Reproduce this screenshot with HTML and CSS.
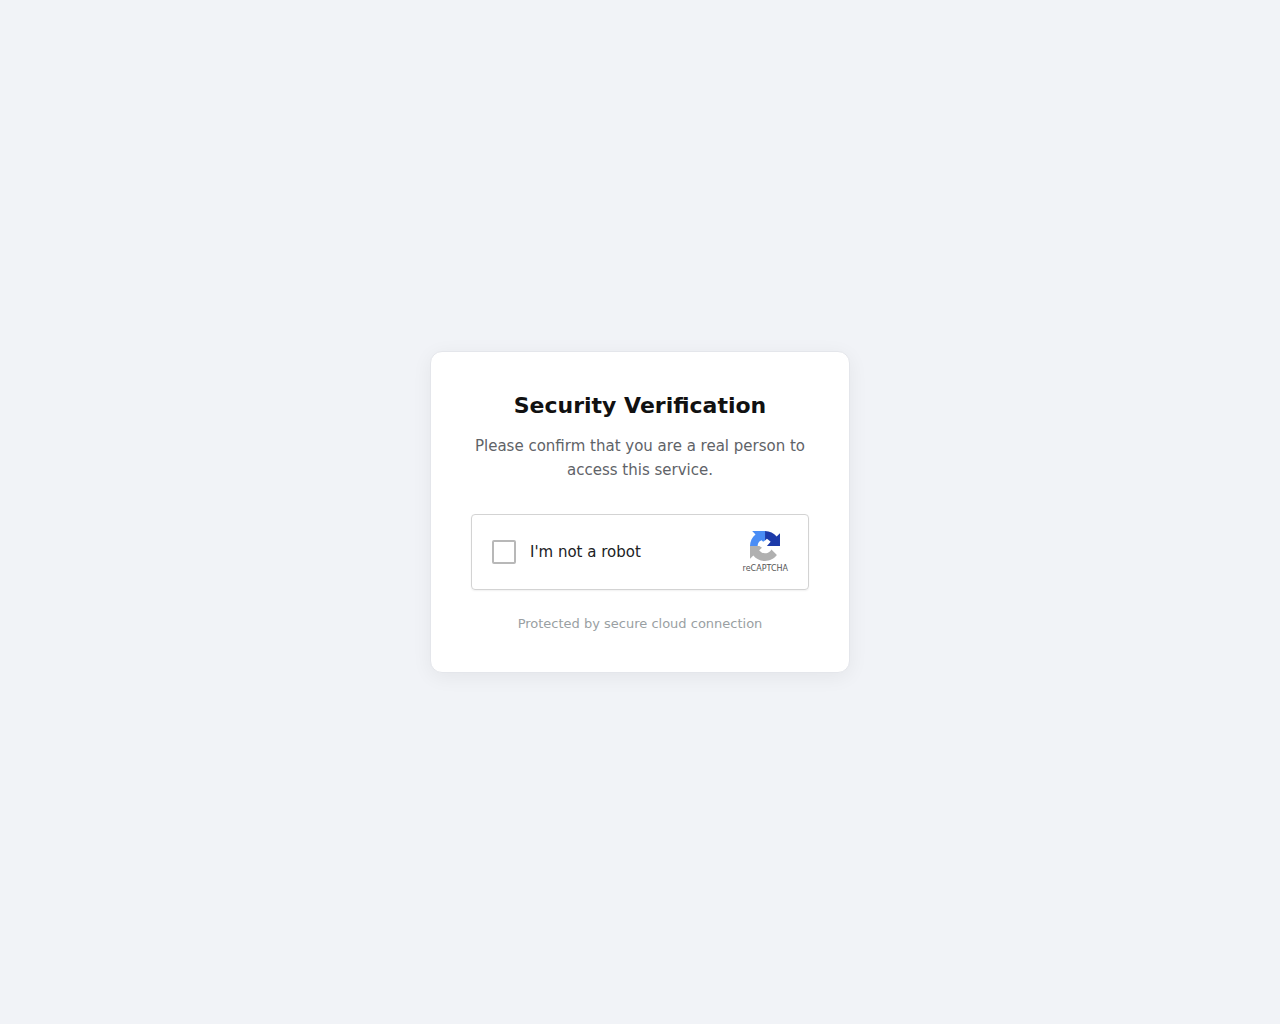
FILE: index.html
```
<!DOCTYPE html>
<html lang="en">
<head>
  <meta charset="UTF-8">
  <meta name="viewport" content="width=device-width, initial-scale=1.0">
  <title>Security Verification</title>
  <link rel="stylesheet" href="styles.css">
</head>
<body>
  <main class="card">
    <h1>Security Verification</h1>
    <p class="subtitle">Please confirm that you are a real person to access this service.</p>

    <div class="captcha-box">
      <label class="captcha-label">
        <input type="checkbox" class="checkbox">
        <span>I'm not a robot</span>
      </label>
      <div class="captcha-logo">
        <svg class="logo-icon" viewBox="0 0 64 64" aria-hidden="true">
          <path fill="#1c3aa9" d="M64 31.955l-.033-1.37V4.687l-7.16 7.16C50.948 4.674 42.033.093 32.05.093V20l4-3.5 3 2 5 4.5-8 9h28z"/>
          <path fill="#4a8df5" d="M32.1.094H4.594l7.16 7.16C4.58 13.147 0 22.06 0 32.046h16.2c.4-4 1.4-7 3.8-9.6l4.5-2.8 3.5 3.5 4.1-3z"/>
          <path fill="#b0b0b0" d="M.001 32.045v27.268l7.16-7.16c5.86 7.173 14.774 11.754 24.76 11.754 10.4 0 19.622-4.96 25.458-12.64L45.643 39.407a15.55 15.55 0 0 1-4.754 5.334c-2.05 1.6-4.952 2.906-8.968 2.906-4.9 0-9.4-2.8-12.4-6.6l6-5.5-5.5-3.5z"/>
        </svg>
        <span>reCAPTCHA</span>
      </div>
    </div>

    <p class="footer">Protected by secure cloud connection</p>
  </main>
</body>
</html>
```
FILE: styles.css
```
* { box-sizing: border-box; margin: 0; padding: 0; }
body {
  font-family: "DejaVu Sans", sans-serif;
  background: #f1f3f7;
  min-height: 100vh;
  display: flex; align-items: center; justify-content: center;
}
.card {
  width: 100%; max-width: 420px;
  padding: 40px;
  background: #fff;
  border: 1px solid #e4e6eb;
  border-radius: 12px;
  box-shadow: 0 4px 20px rgba(0, 0, 0, 0.06);
  text-align: center;
}
h1 { font-size: 22px; line-height: 28px; margin-bottom: 14px; color: #111; }
.subtitle { font-size: 15px; line-height: 24px; margin-bottom: 32px; color: #5f6368; }
.captcha-box {
  display: flex; align-items: center; justify-content: space-between;
  padding: 16px 20px;
  border: 1px solid #d3d3d3;
  border-radius: 4px;
  box-shadow: 0 1px 2px rgba(0, 0, 0, 0.06);
}
.captcha-label {
  display: flex; align-items: center; gap: 14px;
  font-size: 15px; color: #202124;
  cursor: pointer;
}
.checkbox {
  appearance: none;
  width: 24px; height: 24px;
  border: 2px solid #b8b8b8;
  border-radius: 2px;
  background: #fff;
  cursor: pointer;
}
.checkbox:checked { background: #4285f4; border-color: #4285f4; }
.captcha-logo {
  display: flex; flex-direction: column; align-items: center; gap: 4px;
  font-size: 8px; line-height: 8px; color: #555;
}
.logo-icon { width: 30px; height: 30px; }
.footer { margin-top: 26px; font-size: 13px; line-height: 16px; color: #9a9fa3; }
```
